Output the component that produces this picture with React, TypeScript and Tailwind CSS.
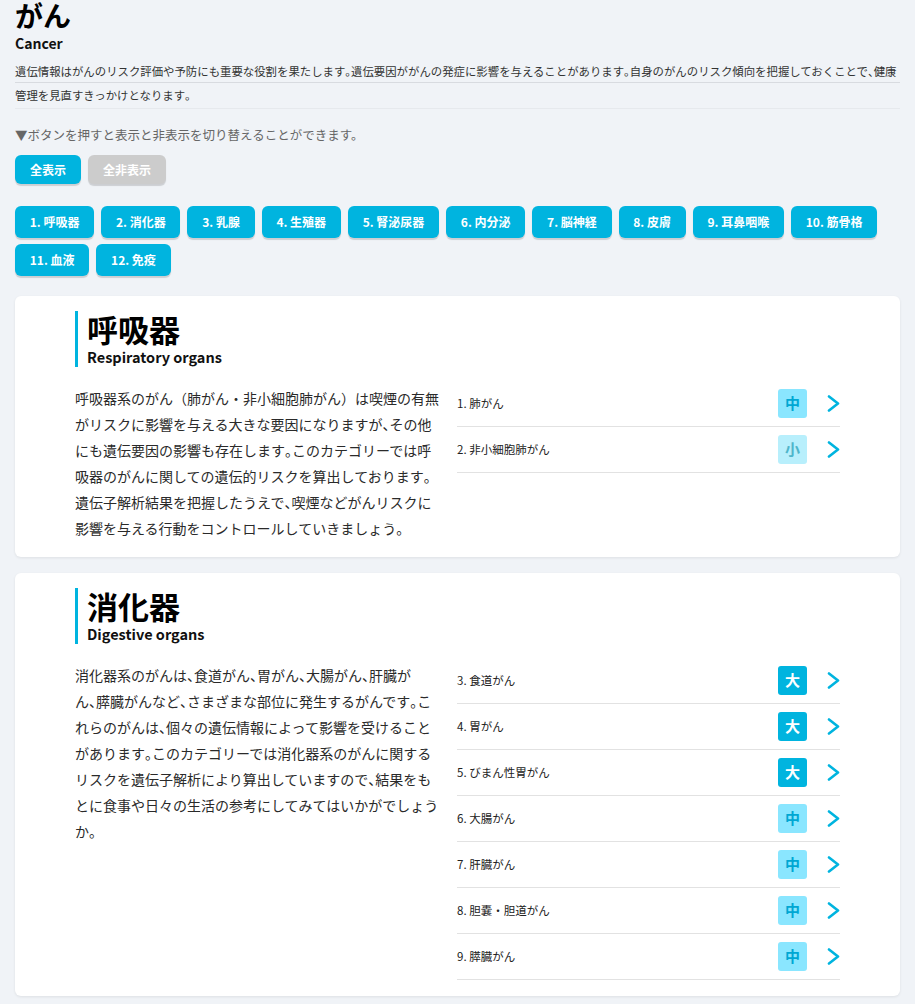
type Item = { no: number; name: string; level: "大" | "中" | "小" }

type Section = {
  title: string
  en: string
  lines: string[]
  items: Item[]
}

const categories = [
  "1. 呼吸器",
  "2. 消化器",
  "3. 乳腺",
  "4. 生殖器",
  "5. 腎泌尿器",
  "6. 内分泌",
  "7. 脳神経",
  "8. 皮膚",
  "9. 耳鼻咽喉",
  "10. 筋骨格",
  "11. 血液",
  "12. 免疫",
]

// lines are broken the way the page breaks them
const sections: Section[] = [
  {
    title: "呼吸器",
    en: "Respiratory organs",
    lines: [
      "呼吸器系のがん（肺がん・非小細胞肺がん）は喫煙の有無",
      "がリスクに影響を与える大きな要因になりますが、その他",
      "にも遺伝要因の影響も存在します。このカテゴリーでは呼",
      "吸器のがんに関しての遺伝的リスクを算出しております。",
      "遺伝子解析結果を把握したうえで、喫煙などがんリスクに",
      "影響を与える行動をコントロールしていきましょう。",
    ],
    items: [
      { no: 1, name: "肺がん", level: "中" },
      { no: 2, name: "非小細胞肺がん", level: "小" },
    ],
  },
  {
    title: "消化器",
    en: "Digestive organs",
    lines: [
      "消化器系のがんは、食道がん、胃がん、大腸がん、肝臓が",
      "ん、膵臓がんなど、さまざまな部位に発生するがんです。こ",
      "れらのがんは、個々の遺伝情報によって影響を受けること",
      "があります。このカテゴリーでは消化器系のがんに関する",
      "リスクを遺伝子解析により算出していますので、結果をも",
      "とに食事や日々の生活の参考にしてみてはいかがでしょう",
      "か。",
    ],
    items: [
      { no: 3, name: "食道がん", level: "大" },
      { no: 4, name: "胃がん", level: "大" },
      { no: 5, name: "びまん性胃がん", level: "大" },
      { no: 6, name: "大腸がん", level: "中" },
      { no: 7, name: "肝臓がん", level: "中" },
      { no: 8, name: "胆嚢・胆道がん", level: "中" },
      { no: 9, name: "膵臓がん", level: "中" },
    ],
  },
]

const levelClass = {
  大: "bg-[#00b4df] text-white",
  中: "bg-[#8ae6ff] text-[#00a7d3]",
  小: "bg-[#b8effc] text-[#4eb5ca]",
}

// half-width 、。 like the original page
function Jp({ t }: { t: string }) {
  return (
    <>
      {t.split(/([、。])/).map((p, i) =>
        p === "、" || p === "。" ? (
          <span key={i} className="[font-feature-settings:'halt']">
            {p}
          </span>
        ) : (
          p
        )
      )}
    </>
  )
}

function Badge({ level }: { level: Item["level"] }) {
  return (
    <div
      className={
        "w-[29px] h-[29px] rounded-[3px] flex items-center justify-center text-[15px] font-bold " +
        levelClass[level]
      }
    >
      {level}
    </div>
  )
}

function Chevron() {
  return (
    <svg width="13" height="17" viewBox="0 0 13 17" className="ml-[20px] shrink-0">
      <polyline
        points="2,1.5 11,8.5 2,15.5"
        fill="none"
        stroke="#00b4df"
        strokeWidth="2.6"
        strokeLinecap="round"
        strokeLinejoin="round"
      />
    </svg>
  )
}

function SectionCard({ s }: { s: Section }) {
  return (
    <div className="bg-white rounded-[6px] shadow-[0_1px_3px_rgba(0,0,0,0.08)] pt-[15px] pb-[16px] px-[60px]">
      <div className="border-l-[3px] border-[#00b4df] pl-[9px]">
        <h2 className="text-[31px] font-bold leading-[36px] text-black">{s.title}</h2>
        <div className="text-[14.5px] font-bold leading-[20px] text-[#111]">{s.en}</div>
      </div>

      <div className="flex mt-[18px]">
        <div className="w-[382px] shrink-0 text-[14px] leading-[26px] text-[#2a2a2a]">
          {s.lines.map((l, i) => (
            <div key={i} className="whitespace-nowrap">
              <Jp t={l} />
            </div>
          ))}
        </div>
        <ul className="flex-1 -mt-[4px]">
          {s.items.map(it => (
            <li
              key={it.no}
              className="h-[46px] flex items-center border-b border-[#e2e2e2]"
            >
              <span className="flex-1 text-[11.5px] text-[#222]">
                {it.no}. {it.name}
              </span>
              <Badge level={it.level} />
              <Chevron />
            </li>
          ))}
        </ul>
      </div>
    </div>
  )
}

export default function App() {
  return (
    <div
      className="min-h-screen bg-[#f0f3f7] px-[15px] pb-[10px] text-[#222]"
      style={{ fontFamily: '"Noto Sans CJK JP", "Noto Sans", sans-serif' }}
    >
      <h1 className="text-[28px] font-bold leading-[32px] -mt-[1px] text-black">がん</h1>
      <div className="text-[14px] font-bold leading-[18px] mt-[3px] text-[#111]">Cancer</div>

      {/* intro, lined like a notebook */}
      <div className="mt-[8px] text-[11.4px] text-[#333]">
        <div className="h-[23px] leading-[23px] border-b border-[#d8dbe0] whitespace-nowrap">
          <Jp t="遺伝情報はがんのリスク評価や予防にも重要な役割を果たします。遺伝要因ががんの発症に影響を与えることがあります。自身のがんのリスク傾向を把握しておくことで、健康" />
        </div>
        <div className="h-[26px] leading-[25px] border-b border-[#e6e9ed] whitespace-nowrap">
          <Jp t="管理を見直すきっかけとなります。" />
        </div>
      </div>

      <div className="mt-[17px] text-[12.5px] leading-[18px] text-[#666]">
        ▼ボタンを押すと表示と非表示を切り替えることができます。
      </div>

      <div className="flex gap-[7px] mt-[11px]">
        <button className="h-[29px] px-[15px] rounded-[6px] bg-[#00b4df] text-white text-[12px] font-bold shadow-[0_2px_1px_rgba(0,0,0,0.15)]">
          全表示
        </button>
        <button className="h-[29px] px-[15px] rounded-[6px] bg-[#cccccc] text-white text-[12px] font-bold shadow-[0_2px_1px_rgba(0,0,0,0.15)]">
          全非表示
        </button>
      </div>

      <div className="flex flex-wrap gap-x-[7px] gap-y-[6px] mt-[22px]">
        {categories.map(c => (
          <button
            key={c}
            className="h-[32px] px-[14.75px] rounded-[6px] bg-[#00b4df] text-white text-[12px] font-bold shadow-[0_2px_1px_rgba(0,0,0,0.15)]"
          >
            {c}
          </button>
        ))}
      </div>

      <div className="flex flex-col gap-[16px] mt-[20px]">
        {sections.map(s => (
          <SectionCard key={s.title} s={s} />
        ))}
      </div>
    </div>
  )
}
